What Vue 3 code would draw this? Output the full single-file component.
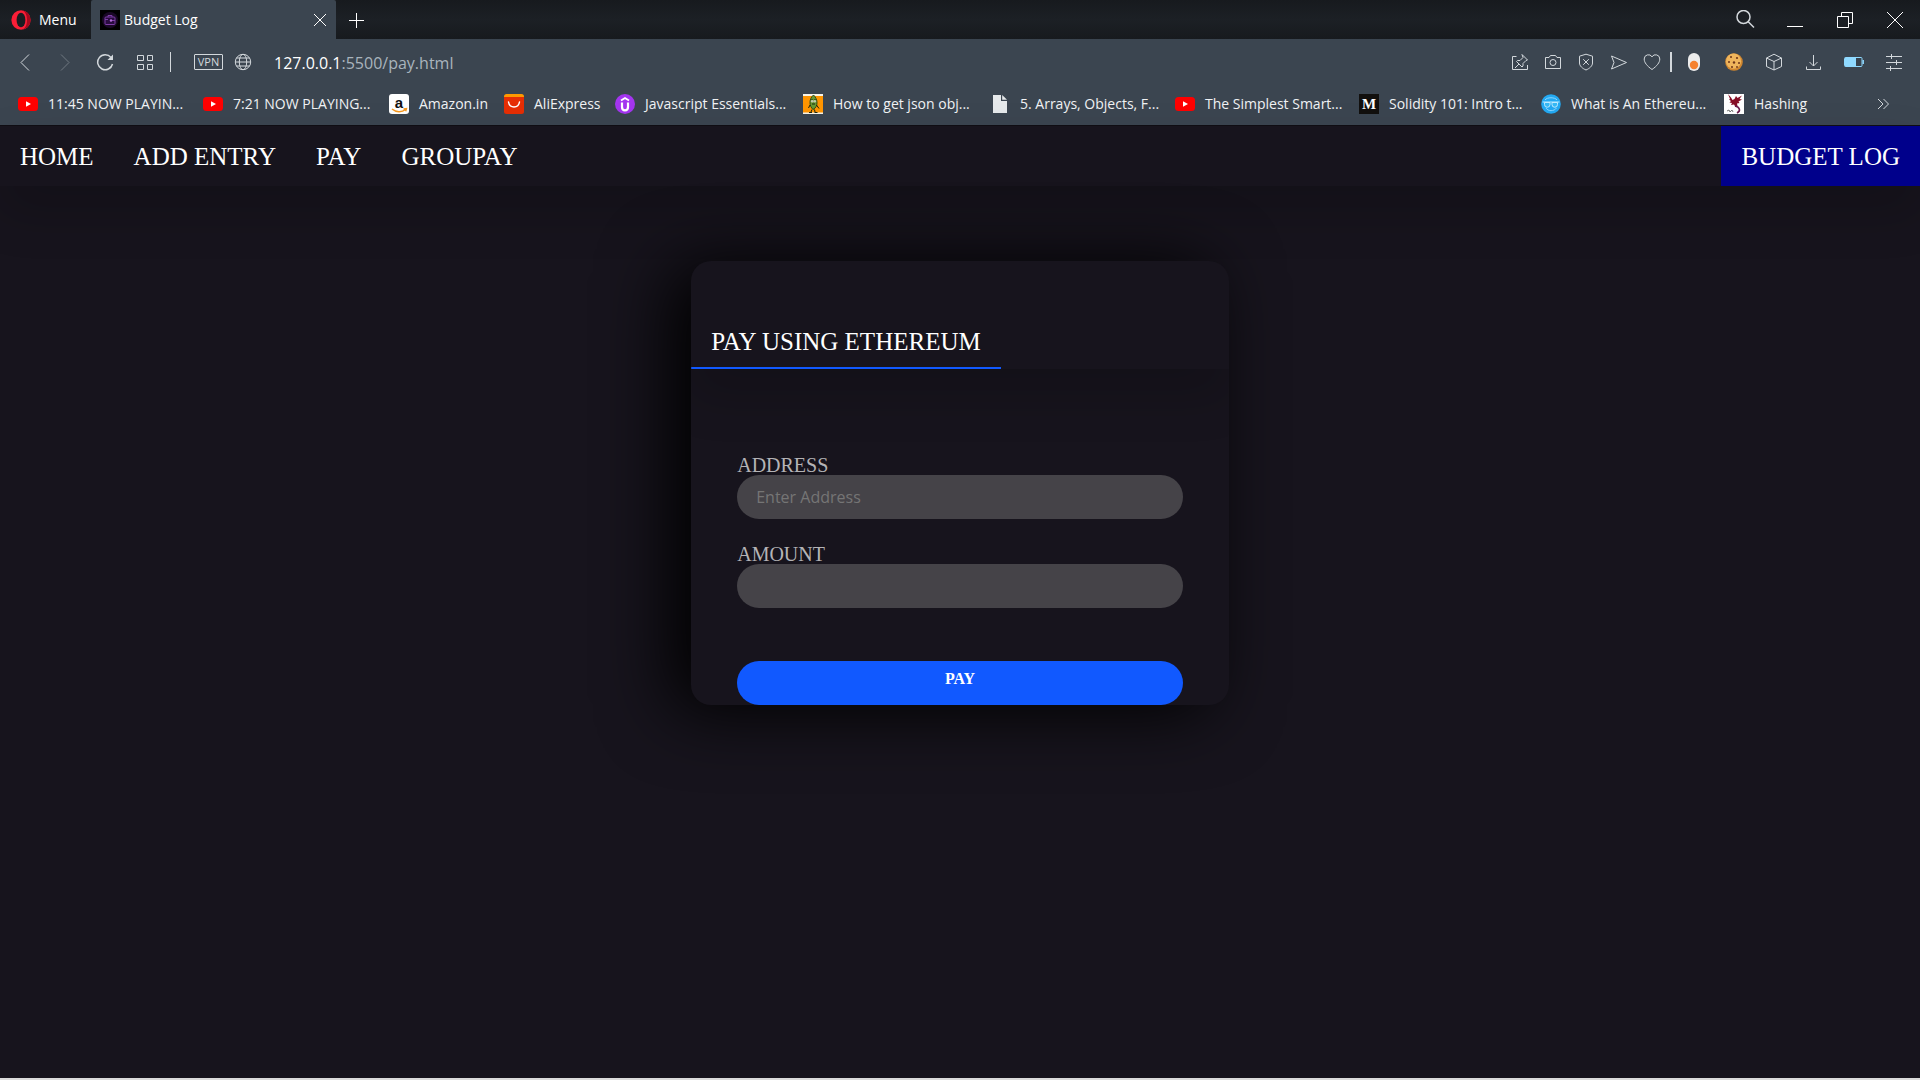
<script setup>
import { ref } from 'vue'

const address = ref('')
const amount = ref('')

const bookmarks = [
  { icon: 'youtube', label: '11:45 NOW PLAYIN...', width: 185 },
  { icon: 'youtube', label: '7:21 NOW PLAYING...', width: 186 },
  { icon: 'amazon', label: 'Amazon.in', width: 115 },
  { icon: 'ali', label: 'AliExpress', width: 111 },
  { icon: 'udemy', label: 'Javascript Essentials...', width: 188 },
  { icon: 'peapod', label: 'How to get json obj...', width: 187 },
  { icon: 'page', label: '5. Arrays, Objects, F...', width: 185 },
  { icon: 'youtube', label: 'The Simplest Smart...', width: 184 },
  { icon: 'medium', label: 'Solidity 101: Intro t...', width: 182 },
  { icon: 'face', label: 'What is An Ethereu...', width: 183 },
  { icon: 'dragon', label: 'Hashing', width: 100 },
]

const links = ['HOME', 'ADD ENTRY', 'PAY', 'GROUPAY']
</script>

<template>
  <div class="window">
    <header class="chrome">
      <div class="tabs">
        <button class="menu" type="button">
          <svg width="20" height="20" viewBox="0 0 20 20">
            <ellipse cx="10" cy="10" rx="9.6" ry="9.8" fill="#fa1e37" />
            <path d="M10 .2a9.6 9.8 0 0 1 0 19.6c3.5 0 6-4 6-9.8S13.500.2 10 .2z" fill="#a5091e" />
            <ellipse cx="10" cy="10" rx="4.4" ry="7.3" fill="#1a1d22" />
          </svg>
          <span>Menu</span>
        </button>
        <div class="tab">
          <svg width="20" height="20" viewBox="0 0 20 20">
            <rect width="20" height="20" fill="#000" />
            <circle cx="10" cy="10" r="8" fill="#1a0826" />
            <rect x="5" y="7" width="10" height="7.500" rx="1" fill="#2a0c40" stroke="#7d3da6" />
            <path d="M8 7v-1.500h4v1.500M5 9.500h3M11 10.500h4" fill="none" stroke="#7d3da6" />
            <circle cx="11" cy="10.500" r="1.200" fill="#b56ddb" />
          </svg>
          <span class="tab-title">Budget Log</span>
          <button class="icon-btn close-tab" type="button" aria-label="Close tab">
            <svg width="14" height="14" viewBox="0 0 14 14"><path d="M1 1l12 12M13 1L1 13" class="line bright" /></svg>
          </button>
        </div>
        <button class="icon-btn new-tab" type="button" aria-label="New tab">
          <svg width="16" height="16" viewBox="0 0 16 16"><path d="M8.500 1v15M1 8.500h15" class="line bright" /></svg>
        </button>
        <div class="controls">
          <button class="icon-btn win" type="button" aria-label="Search">
            <svg width="20" height="20" viewBox="0 0 20 20"><circle cx="8.500" cy="7" r="6.500" class="line thick" /><path d="M13 11.500l6 6" class="line thick" /></svg>
          </button>
          <button class="icon-btn win" type="button" aria-label="Minimize">
            <svg width="18" height="18" viewBox="0 0 18 18"><path d="M1 15.500h16" class="line bright" /></svg>
          </button>
          <button class="icon-btn win" type="button" aria-label="Restore">
            <svg width="18" height="18" viewBox="0 0 18 18"><path d="M1.500 5.500h11v11h-11zM5.500 5.500v-4h11v11h-4" class="line bright" /></svg>
          </button>
          <button class="icon-btn win" type="button" aria-label="Close">
            <svg width="18" height="18" viewBox="0 0 18 18"><path d="M1 1l16 16M17 1L1 17" class="line bright" /></svg>
          </button>
        </div>
      </div>

      <div class="toolbar">
        <button class="icon-btn nav-btn" type="button" aria-label="Back">
          <svg width="18" height="18" viewBox="0 0 18 18"><path d="M13 1.500L5 9.500l8 8" class="line" /></svg>
        </button>
        <button class="icon-btn nav-btn dim" type="button" aria-label="Forward">
          <svg width="18" height="18" viewBox="0 0 18 18"><path d="M5 1.500l8 8-8 8" class="line" /></svg>
        </button>
        <button class="icon-btn nav-btn" type="button" aria-label="Reload">
          <svg width="18" height="18" viewBox="0 0 18 18"><path d="M15 4.500A7.500 7.500 0 1 0 16.500 11" class="line thick" /><path d="M17 1.500v5.500h-5.500z" fill="#d3d8dc" /></svg>
        </button>
        <button class="icon-btn nav-btn" type="button" aria-label="Speed dial">
          <svg width="18" height="18" viewBox="0 0 18 18"><path d="M1.500 2.500h6v5h-6zM11.500 2.500h5v5h-5zM1.500 11.500h6v5h-6zM11.500 11.500h5v5h-5z" class="line" /></svg>
        </button>
        <span class="divider thin"></span>
        <button class="vpn" type="button">VPN</button>
        <svg class="globe" width="18" height="18" viewBox="0 0 18 18"><circle cx="9" cy="9" r="7.700" class="line" /><ellipse cx="9" cy="9" rx="3.700" ry="7.700" class="line" /><path d="M1.500 9h15M2.500 5h13M2.500 13h13" class="line" /></svg>
        <div class="url"><span class="host">127.0.0.1</span>:5500/pay.html</div>

        <button class="icon-btn page-btn" type="button" aria-label="Pinboard">
          <svg width="18" height="18" viewBox="0 0 18 18"><path d="M5.500 3.500h-4v13h15v-4.500M11 1.500l5.500 5.500-1.500.5-3 3v2.500l-1 1L5.500 8.500l1-1H9l3-3zM8 11l-4 4" class="line" /></svg>
        </button>
        <button class="icon-btn page-btn" type="button" aria-label="Snapshot">
          <svg width="18" height="18" viewBox="0 0 18 18"><path d="M1.500 4.500h3.500l1.500-2h5l1.500 2h3.500v11h-15z" class="line" /><circle cx="9" cy="9.500" r="3" class="line" /></svg>
        </button>
        <button class="icon-btn page-btn" type="button" aria-label="Blocker">
          <svg width="18" height="18" viewBox="0 0 18 18"><path d="M9 1.200l6.500 2V10c0 3-3 5.500-6.500 7-3.500-1.500-6.500-4-6.500-7V3.200zM6.200 6.200l5.600 5.600M11.800 6.200l-5.600 5.600" class="line" /></svg>
        </button>
        <button class="icon-btn page-btn" type="button" aria-label="Send">
          <svg width="18" height="18" viewBox="0 0 18 18"><path d="M1.500 3l15 6.500-15 6.500 2.500-6.500z" class="line" /></svg>
        </button>
        <button class="icon-btn page-btn" type="button" aria-label="Favourite">
          <svg width="18" height="18" viewBox="0 0 18 18"><path d="M9 16.500C4 13 1.200 9.500 1.200 6A4.200 4.200 0 0 1 9 3.800 4.200 4.200 0 0 1 16.800 6C16.800 9.500 14 13 9 16.500z" class="line" /></svg>
        </button>
        <span class="divider"></span>
        <button class="icon-btn ext" type="button" aria-label="Toggle extension">
          <svg width="12" height="20" viewBox="0 0 12 20"><rect y="1" width="12" height="18" rx="6" fill="#ececec" /><circle cx="6" cy="13" r="4.200" fill="#f5822f" /></svg>
        </button>
        <button class="icon-btn ext" type="button" aria-label="Cookies">
          <svg width="18" height="18" viewBox="0 0 18 18"><circle cx="9" cy="9" r="8.800" fill="#cf8630" /><circle cx="8.500" cy="8.200" r="7.600" fill="#efb55c" /><g fill="#6d3519"><circle cx="6" cy="4" r="1" /><circle cx="12" cy="5" r="1.100" /><circle cx="4" cy="9" r="1" /><circle cx="9" cy="9.500" r="1.200" /><circle cx="14" cy="10" r="1" /><circle cx="7" cy="14" r="1" /><circle cx="12" cy="14" r=".9" /></g></svg>
        </button>
        <button class="icon-btn ext" type="button" aria-label="Extensions">
          <svg width="18" height="18" viewBox="0 0 18 18"><path d="M9 1.200l7.500 3.800v8.500L9 17l-7.500-3.500V5zM1.500 5L9 8.500 16.500 5M9 8.500V17" class="line" /></svg>
        </button>
        <button class="icon-btn ext" type="button" aria-label="Downloads">
          <svg width="18" height="18" viewBox="0 0 18 18"><path d="M8.500 2v11M4.500 9l4 4 4-4M1.500 13.500v3h14v-3" class="line" /></svg>
        </button>
        <button class="icon-btn ext" type="button" aria-label="Battery saver">
          <svg width="20" height="12" viewBox="0 0 20 12"><rect x=".5" y="1.500" width="17.500" height="9" rx="1" fill="#37424d" stroke="#8fd9ff" /><path d="M1 1.500h11v9H1z" fill="#8fd9ff" /><path d="M19.200 4v4" stroke="#8fd9ff" stroke-width="1.500" /></svg>
        </button>
        <button class="icon-btn ext" type="button" aria-label="Easy setup">
          <svg width="18" height="18" viewBox="0 0 18 18"><path d="M1 3.500h16M1 9.500h16M1 15.500h16M6.500 1v5M11.500 7v5M5.500 13v5" class="line" /></svg>
        </button>
      </div>

      <nav class="bookmarks" aria-label="Bookmarks">
        <a v-for="b in bookmarks" :key="b.label" class="bookmark" href="#" :style="{ width: b.width + 'px' }">
          <svg width="20" height="20" viewBox="0 0 20 20" aria-hidden="true">
            <template v-if="b.icon === 'youtube'">
              <rect y="3" width="20" height="14" rx="3.500" fill="#f00" /><path d="M8 7.200l5 2.800-5 2.800z" fill="#fff" />
            </template>
            <template v-else-if="b.icon === 'amazon'">
              <rect width="20" height="20" rx="3" fill="#fff" />
              <text x="10" y="14" text-anchor="middle" class="glyph amazon">a</text>
              <path d="M3 15c4 3.500 10 3.500 13.500.5M14.500 15l3-.5-.8 2.800" fill="none" stroke="#f7981d" stroke-width="1.400" />
            </template>
            <template v-else-if="b.icon === 'ali'">
              <rect width="20" height="14" rx="2.500" fill="#f90" /><path d="M0 3h20v14.500a2.500 2.500 0 0 1-2.500 2.500h-15A2.500 2.500 0 0 1 0 17.500z" fill="#e62e04" />
              <path d="M4.500 8c1 6.500 10 6.500 11 0" fill="none" stroke="#fff" stroke-width="1.500" stroke-linecap="round" />
            </template>
            <template v-else-if="b.icon === 'udemy'">
              <circle cx="10" cy="10" r="10" fill="#a435f0" />
              <path d="M7 8.500V13c0 4.500 6 4.500 6 0V8.500" fill="none" stroke="#fff" stroke-width="2.200" /><path d="M6 6.500l4-2.500 4 2.500" fill="none" stroke="#fff" stroke-width="1.800" />
            </template>
            <template v-else-if="b.icon === 'peapod'">
              <rect width="20" height="20" fill="#f7f3e8" /><rect y="2" width="20" height="16.500" fill="#ff9500" />
              <path d="M10.500 1C8 3 7 6 7 8.500c0 3 1 5 3 7 3-1.500 4-4 4-7S12.500 3 10.500 1z" fill="#669a32" stroke="#304b19" />
              <path d="M8.500 5.500h1M11.500 5.500h1M9 10h3M7 11l-1.500 3M13.500 11l2.500 3.500M9 15.500l-1 2.500M11.500 15.500l.5 2.500M6 18.500h3M11.500 18.500h3" stroke="#1c260f" fill="none" />
              <circle cx="9.200" cy="7.200" r="1.300" fill="#c1caae" /><circle cx="11.800" cy="7.200" r="1.300" fill="#c1caae" />
            </template>
            <template v-else-if="b.icon === 'page'">
              <path d="M3 1h8v6h6v12H3z" fill="#e6e9eb" /><path d="M12.200 1L17 5.800h-4.800z" fill="#e6e9eb" />
            </template>
            <template v-else-if="b.icon === 'medium'">
              <rect width="20" height="20" fill="#12100e" /><text x="10" y="15" text-anchor="middle" class="glyph medium">M</text>
            </template>
            <template v-else-if="b.icon === 'face'">
              <circle cx="10" cy="10" r="9.800" fill="#23a9f2" />
              <path d="M4 6c2-3 10-3 12 0M5 14c2 3.500 8 3.500 10.500 0" fill="none" stroke="#8bd6ff" />
              <path d="M1.500 8h17M3.500 8.500h5.500v2a2.700 2.700 0 0 1-5.500 0zM11 8.500h5.500v2a2.700 2.700 0 0 1-5.500 0z" fill="#37b9f5" stroke="#bdeaff" />
            </template>
            <template v-else>
              <rect width="20" height="20" fill="#fff" />
              <path d="M4 0l3 3.500L8.500 6l2-1L12 2l1.500 2L18 1.500 15.500 5l2.500.5-3.500 2 1 1.500-2.500.5.500 2.500-2 1-1.500-2.500L7 11l1-2-2.500-.5L7 7 5 5.500l1-.5z" fill="#870f27" />
              <path d="M11 12c5 1 6 5 2 7" fill="none" stroke="#6b1a4b" stroke-width="1.600" /><path d="M3 17l2-1 1 2 2-2 1 2" fill="none" stroke="#777" />
            </template>
          </svg>
          <span>{{ b.label }}</span>
        </a>
        <button class="icon-btn more" type="button" aria-label="More bookmarks">
          <svg width="12" height="12" viewBox="0 0 12 12"><path d="M1 1l5 5-5 5M6.500 1l5 5-5 5" class="line" /></svg>
        </button>
      </nav>
    </header>

    <main class="page">
      <nav class="site-nav">
        <a v-for="l in links" :key="l" href="#">{{ l }}</a>
        <a class="brand" href="#">BUDGET LOG</a>
      </nav>

      <section class="card">
        <div class="card-head">
          <h1>PAY USING ETHEREUM</h1>
        </div>
        <form class="pay-form" @submit.prevent>
          <label for="address">ADDRESS</label>
          <input id="address" v-model="address" type="text" placeholder="Enter Address" />
          <label for="amount">AMOUNT</label>
          <input id="amount" v-model="amount" type="text" />
          <button class="pay" type="submit">PAY</button>
        </form>
      </section>
    </main>
  </div>
</template>

<style>
body {
  background: #17141d;
}
</style>

<style scoped>
.window {
  min-height: 100vh;
  box-sizing: border-box;
  display: flex;
  flex-direction: column;
  border-bottom: 2px solid #dcdcdc;
  background: #17141d;
}
button {
  border: 0;
  padding: 0;
  background: none;
  color: inherit;
  font: inherit;
}
a {
  color: inherit;
  text-decoration: none;
}
.chrome {
  background: #3b4550;
  color: #f0f2f4;
  font: 14px/20px "Open Sans", "Noto Sans", sans-serif;
}
.line {
  fill: none;
  stroke: #d3d8dc;
  stroke-width: 1;
}
.line.thick {
  stroke-width: 1.5;
}
.line.bright {
  stroke: #fff;
}
.icon-btn {
  display: flex;
  align-items: center;
  justify-content: center;
  flex: none;
}

/* Tab strip */
.tabs {
  display: flex;
  height: 39px;
  background: linear-gradient(#171a1e, #1c2025 50%, #171a1e);
}
.menu {
  display: flex;
  align-items: center;
  gap: 8px;
  width: 91px;
  padding-left: 11px;
  color: #fff;
}
.tab {
  display: flex;
  align-items: center;
  gap: 4px;
  box-sizing: border-box;
  width: 245px;
  padding: 0 4px 0 9px;
  background: #3b4550;
  border-radius: 2px 2px 0 0;
  color: #fff;
}
.tab-title {
  flex: 1;
}
.close-tab {
  width: 24px;
  height: 24px;
}
.new-tab {
  width: 40px;
}
.controls {
  display: flex;
  margin-left: auto;
}
.win {
  width: 50px;
}

/* Address bar */
.toolbar {
  display: flex;
  align-items: center;
  height: 45px;
  padding: 0 6px 0 5px;
}
.nav-btn {
  width: 40px;
  height: 40px;
}
.dim {
  opacity: 0.35;
}
.divider {
  width: 2px;
  height: 20px;
  margin: 0 2px;
  background: #d3d8dc;
}
.divider.thin {
  width: 1px;
  margin: 0 23px 0 5px;
}
.vpn {
  box-sizing: border-box;
  width: 29px;
  height: 16px;
  border: 1px solid #d3d8dc;
  border-radius: 1px;
  color: #d3d8dc;
  font-size: 11px;
  line-height: 14px;
}
.globe {
  margin-left: 11px;
}
.url {
  flex: 1;
  margin-left: 22px;
  padding-top: 2px;
  color: #a9b4bd;
  font-size: 16px;
}
.host {
  color: #fff;
}
.page-btn {
  width: 33px;
  height: 40px;
}
.ext {
  width: 40px;
  height: 40px;
}

/* Bookmarks bar */
.bookmarks {
  display: flex;
  align-items: center;
  height: 40px;
  padding: 0 31px 1px 18px;
}
.bookmark {
  display: flex;
  align-items: center;
  gap: 10px;
  white-space: nowrap;
}
.bookmark svg {
  flex: none;
  overflow: visible;
}
.more {
  margin-left: auto;
}
.glyph.amazon {
  font: bold 15px "Liberation Sans", sans-serif;
  fill: #111;
}
.glyph.medium {
  font: bold 15px "Liberation Serif", serif;
  fill: #fff;
}

/* Web page */
.page {
  flex: 1;
  border-top: 1px solid #100e14;
  color: #fff;
  font-family: "Liberation Serif", serif;
}
.site-nav {
  display: flex;
  font-size: 25px;
  line-height: 28px;
  box-shadow: 0 25px 50px rgba(0, 0, 0, 0.19);
}
.site-nav a {
  padding: 17px 20px 15px;
}
.site-nav .brand {
  margin-left: auto;
  background: #00008b;
}
.card {
  width: 28%;
  margin: 75px auto 0;
  padding-top: 48px;
  border-radius: 20px;
  background: #17141d;
  box-shadow: -20px 5px 70px #000;
}
.card-head {
  display: flex;
  box-shadow: 0 25px 50px rgba(0, 0, 0, 0.19);
  clip-path: inset(0 0 -90px 0);
}
h1 {
  margin: 0;
  padding: 19px 20px 11px;
  border-bottom: 2px solid #1159ff;
  font-size: 25px;
  font-weight: 400;
  line-height: 28px;
}
.pay-form {
  display: flex;
  flex-direction: column;
  padding: 86px 46px 0;
}
.pay-form label {
  color: #b4b3b6;
  font-size: 20px;
  line-height: 20px;
}
.pay-form input {
  box-sizing: border-box;
  height: 44px;
  margin-bottom: 25px;
  padding: 0 19px;
  border: 0;
  border-radius: 22px;
  background: #454348;
  color: #fff;
  font: 16px "Open Sans", "Noto Sans", sans-serif;
}
.pay-form input::placeholder {
  color: #757575;
}
.pay {
  height: 44px;
  margin-top: 28px;
  padding-bottom: 8px;
  border-radius: 22px;
  background: #1159ff;
  color: #fff;
  font-size: 16px;
  font-weight: 700;
}
</style>
